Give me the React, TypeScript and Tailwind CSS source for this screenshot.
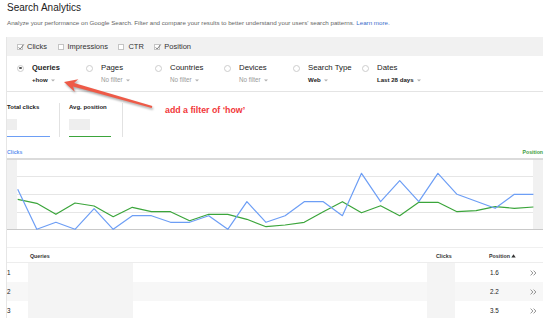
import React from "react";

const BLUE = [189.3,229.3,222.3,229.3,208.7,229.3,215.7,215.7,222.3,222.3,215.7,229.3,201.7,222.3,215.7,201.7,201.7,215.7,173.3,201.7,180.7,201.7,173.3,194.3,201.3,208.3,194.3,194.3];
const GREEN = [199.3,203.3,214.3,203,206,216.7,207.3,211.7,211.7,220.7,214.3,214.3,219.3,226.7,225,222.3,211.7,201.7,212.7,205.7,215.7,202.3,202.3,211.7,210.7,206.7,208.3,207];

const pts = (ys: number[]) =>
  ys.map((y, i) => `${(10.7 + 19.1 * i).toFixed(1)},${(y - 158).toFixed(1)}`).join(" ");

function Check({ checked }: { checked: boolean }) {
  return (
    <span className="relative block w-[6px] h-[6px] border border-[#c4c4c4] bg-white shrink-0">
      {checked && (
        <svg className="absolute left-[-1px] top-[-2px]" width="8" height="8" viewBox="0 0 8 8">
          <path d="M1.6 4.4 L3.2 6 L6.8 1.4" fill="none" stroke="#6f6f6f" strokeWidth="0.9" />
        </svg>
      )}
    </span>
  );
}

function Caret() {
  return (
    <svg width="4" height="3" viewBox="0 0 4 3" className="ml-[3px] inline-block">
      <path d="M0 0.4 L4 0.4 L2 2.6 Z" fill="#b0b0b0" />
    </svg>
  );
}

function Chevrons() {
  return (
    <svg width="7" height="6" viewBox="0 0 7 6" className="block">
      <path d="M0.6 0.6 L2.9 3 L0.6 5.4 M3.6 0.6 L5.9 3 L3.6 5.4" fill="none" stroke="#7a7a7a" strokeWidth="0.8" />
    </svg>
  );
}

const DIMS = [
  { label: "Queries", bold: true, sub: "+how", subBold: true, sel: true },
  { label: "Pages", sub: "No filter" },
  { label: "Countries", sub: "No filter" },
  { label: "Devices", sub: "No filter" },
  { label: "Search Type", sub: "Web", subBold: true },
  { label: "Dates", sub: "Last 28 days", subBold: true },
];

const ROWS = [
  { n: "1", v: "1.6", bg: "bg-white" },
  { n: "2", v: "2.2", bg: "bg-[#f7f7f7]" },
  { n: "3", v: "3.5", bg: "bg-white" },
];

export default function App() {
  return (
    <div className="relative w-[550px] h-[318px] overflow-hidden bg-white font-['Liberation_Sans',Arial,Helvetica,sans-serif] text-[#222]">
      <div className="pl-[7px]">
        <div className="pt-[1px] text-[10px] leading-[13px] text-[#222]">Search Analytics</div>
        <div className="mt-[4px] text-[6.2px] leading-[9px] text-[#666] whitespace-nowrap">
          Analyze your performance on Google Search. Filter and compare your results to better understand your users' search patterns.{" "}
          <span className="text-[#3b6bc9]">Learn more.</span>
        </div>
      </div>

      <div className="mt-[10px] ml-[6px] w-[537px] border-l border-[#e6e6e6]">
        {/* metric checkboxes */}
        <div className="h-[19px] bg-[#f1f1f1] flex items-center pl-[10px] gap-[10.5px] text-[7.5px] leading-[9px] text-[#333]">
          {[
            ["Clicks", true],
            ["Impressions", false],
            ["CTR", false],
            ["Position", true],
          ].map(([l, c]) => (
            <div key={l as string} className="flex items-center gap-[4px]">
              <Check checked={c as boolean} />
              <span>{l as string}</span>
            </div>
          ))}
        </div>

        {/* dimensions */}
        <div className="h-[36px] border-b border-[#e4e4e4] flex pl-[10px] pt-[7px]">
          {DIMS.map((d) => (
            <div key={d.label} className="w-[69px] flex flex-col">
              <div className="flex items-center gap-[8px] h-[10px]">
                <span className="w-[7px] h-[7px] rounded-full border border-[#cdcdcd] bg-white flex items-center justify-center shrink-0">
                  {d.sel && <span className="w-[2.5px] h-[2.5px] rounded-full bg-[#555]" />}
                </span>
                <span
                  className={
                    d.bold
                      ? "text-[7.5px] leading-[10px] font-bold text-[#222] whitespace-nowrap"
                      : "text-[7.8px] leading-[10px] text-[#222] whitespace-nowrap"
                  }
                >
                  {d.label}
                </span>
              </div>
              <div
                className={
                  d.subBold
                    ? "mt-[3px] ml-[15px] flex items-center text-[6.1px] leading-[8px] font-bold text-[#222] whitespace-nowrap"
                    : "mt-[3px] ml-[15px] flex items-center text-[6.3px] leading-[8px] text-[#999] whitespace-nowrap"
                }
              >
                {d.sub}
                <Caret />
              </div>
            </div>
          ))}
        </div>

        {/* totals */}
        <div className="flex pt-[11px]">
          <div className="w-[43px] flex flex-col">
            <div className="text-[6px] leading-[8px] font-bold text-[#222] whitespace-nowrap">Total clicks</div>
            <div className="mt-[8px] w-[10px] h-[11px] bg-[#eeeeee]" />
            <div className="mt-[6px] h-px bg-[#6d9ef5]" />
          </div>
          <div className="ml-[9px] w-px bg-[#e2e2e2]" />
          <div className="ml-[9px] w-[42px] flex flex-col">
            <div className="text-[6px] leading-[8px] font-bold text-[#222] whitespace-nowrap">Avg. position</div>
            <div className="mt-[8px] w-[21px] h-[11px] bg-[#eeeeee]" />
            <div className="mt-[6px] h-px bg-[#3ba53b]" />
          </div>
          <div className="ml-[11px] w-px bg-[#e2e2e2]" />
        </div>

        {/* chart labels */}
        <div className="mt-[11.5px] flex justify-between text-[5.2px] leading-[7px] font-bold">
          <span className="text-[#5f93f0]">Clicks</span>
          <span className="text-[#3a9c3a]">Position</span>
        </div>

        {/* chart */}
        <svg width="536" height="73" className="block mt-[2.5px]">
          <rect x="0" y="1" width="10" height="70.3" fill="#f1f1f1" />
          <rect x="526" y="1" width="10" height="70.3" fill="#f1f1f1" />
          <line x1="0" y1="1" x2="536" y2="1" stroke="#cfcfcf" strokeWidth="1.5" />
          {[18, 36, 54].map((y) => (
            <line key={y} x1="10" x2="526" y1={y + 0.5} y2={y + 0.5} stroke="#e6e6e6" strokeWidth="1" />
          ))}
          <line x1="0" x2="536" y1="71.5" y2="71.5" stroke="#c9c9c9" strokeWidth="1.2" />
          <polyline points={pts(GREEN)} fill="none" stroke="#3ba53b" strokeWidth="1.2" strokeLinejoin="round" />
          <polyline points={pts(BLUE)} fill="none" stroke="#6d9ef5" strokeWidth="1.2" strokeLinejoin="round" />
        </svg>

        {/* table */}
        <div className="mt-[16px] border-t border-[#f0f0f0]">
          <div className="h-[15px] pt-[2px] flex items-center border-b border-[#ededed] text-[5.3px] leading-[7px] font-bold text-[#333]">
            <span className="w-[23px]" />
            <span className="w-[406px]">Queries</span>
            <span className="w-[53px]">Clicks</span>
            <span className="flex items-center">
              Position
              <svg width="5" height="4" viewBox="0 0 5 4" className="ml-[1.5px]">
                <path d="M0.3 3.6 L4.7 3.6 L2.5 0.3 Z" fill="#333" />
              </svg>
            </span>
          </div>
          {ROWS.map((r) => (
            <div key={r.n} className={`h-[19px] flex items-center ${r.bg} text-[6.3px] leading-[8px] text-[#222]`}>
              <span className="w-[21px]">{r.n}</span>
              <span className="w-[105px] h-full bg-[#f4f4f4]" />
              <span className="w-[294px]" />
              <span className="w-[28px] h-full bg-[#f4f4f4]" />
              <span className="w-[35px]" />
              <span className="w-[40px]">{r.v}</span>
              <Chevrons />
            </div>
          ))}
        </div>
      </div>

      {/* annotation arrow */}
      <svg className="absolute left-[55px] top-[70px]" width="110" height="45" viewBox="0 0 110 45">
        <defs>
          <filter id="sh" x="-20%" y="-50%" width="140%" height="200%">
            <feGaussianBlur stdDeviation="0.9" />
          </filter>
        </defs>
        <polygon
          points="9,12 23.3,9.3 19.1,13 97.3,36 96.7,38 18.1,16.4 19.7,21.8"
          fill="rgba(0,0,0,0.35)"
          transform="translate(1,1.8)"
          filter="url(#sh)"
        />
        <polygon points="9,12 23.3,9.3 19.1,13 97.3,36 96.7,38 18.1,16.4 19.7,21.8" fill="#ee5a47" />
      </svg>
      <div className="absolute left-[165px] top-[105px] text-[8.8px] leading-[10px] font-bold text-[#f2383a] whitespace-nowrap">
        add a filter of ‘how’
      </div>
    </div>
  );
}
